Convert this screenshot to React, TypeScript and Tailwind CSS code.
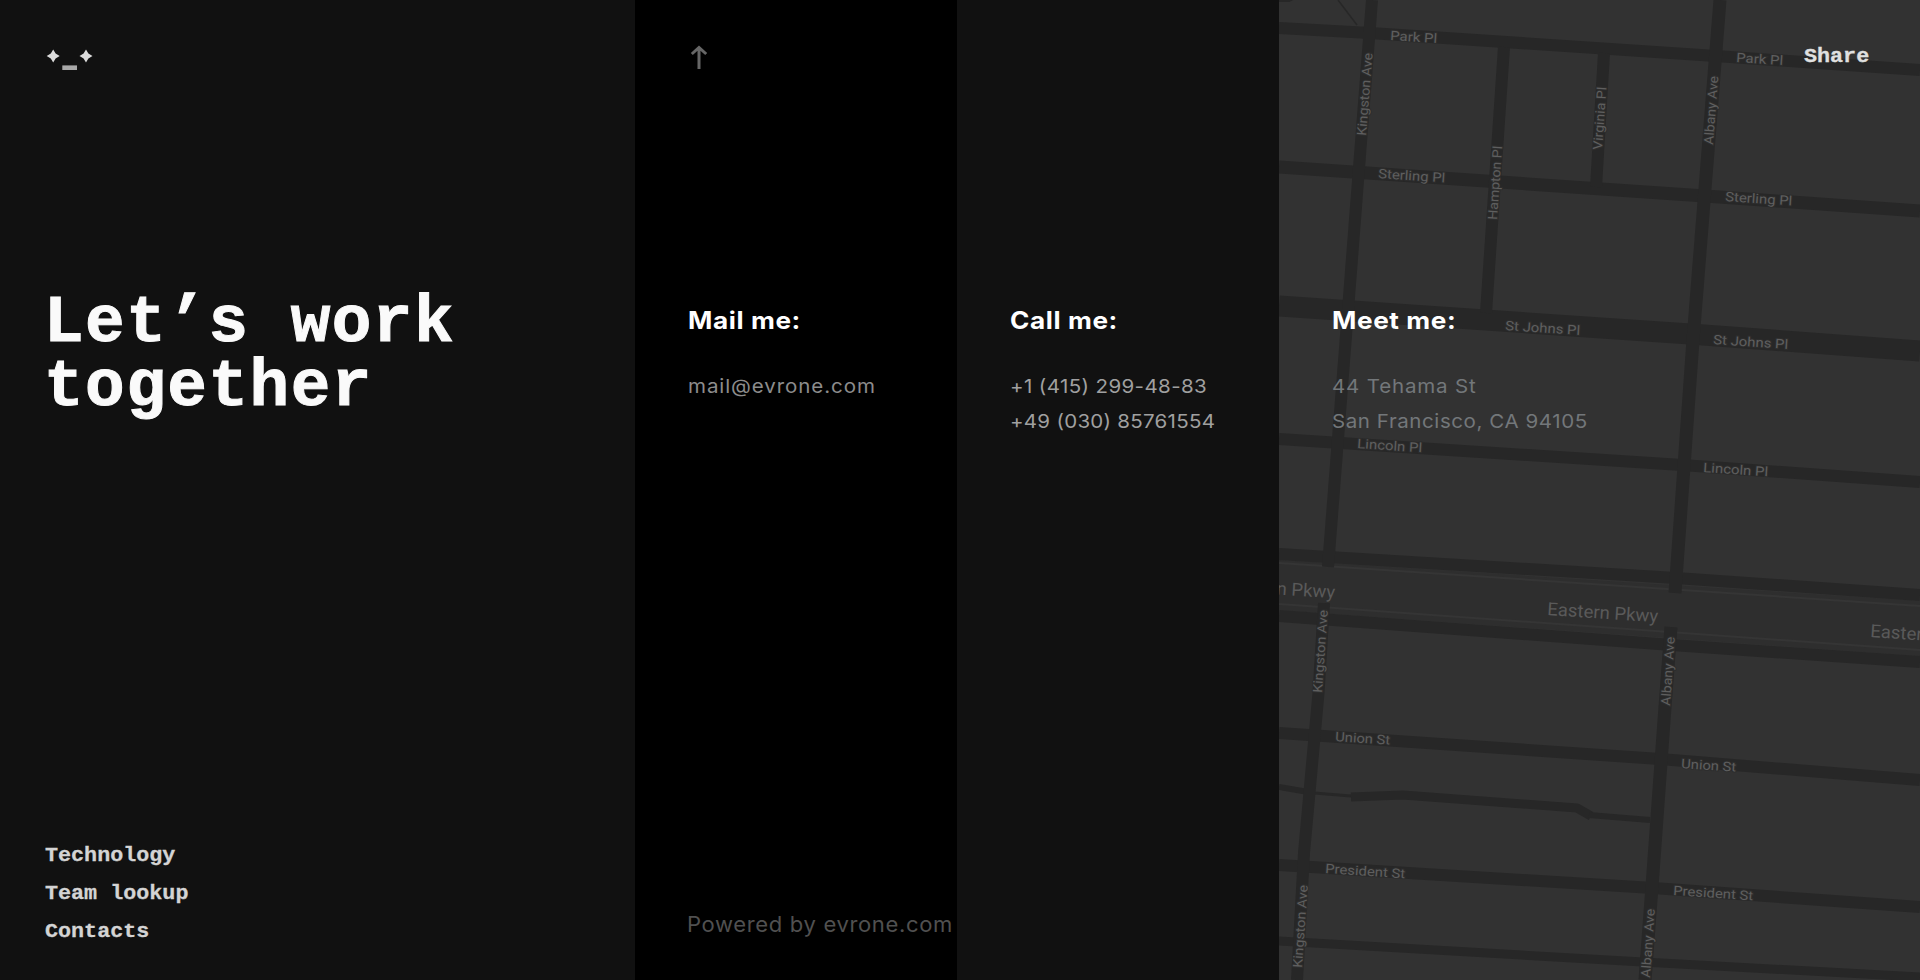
const horizontals = [
  { d: "M0 28 L91 33 L437 56 L641 70", w: 12 },
  { d: "M0 167 L426 196 L641 211", w: 13 },
  { d: "M0 306 L411 334 L641 351", w: 21 },
  { d: "M0 439 L403 465 L641 482", w: 12 },
  { d: "M0 554 L397 578 L641 595", w: 12 },
  { d: "M0 616 L393 645 L641 662", w: 12 },
  { d: "M0 733 L381 759 L641 780", w: 12 },
  { d: "M0 865 L374 888 L641 907", w: 12 },
  { d: "M0 941 L364 962 L641 977", w: 9 },
  { d: "M0 787 L35 793", w: 6 },
  { d: "M35 793 L72 796", w: 3 },
  { d: "M72 797 L124 795 L298 808 L312 816", w: 9 },
  { d: "M310 815 L371 820", w: 6 },
];

const verticals = [
  { d: "M93 0 L70 297 L49 567", w: 12 },
  { d: "M45 603 L39.5 693 L25 853 L18 980", w: 12 },
  { d: "M225 47 L207 313", w: 12 },
  { d: "M325 53 L317 187", w: 12 },
  { d: "M441 0 L414 340 L396 593", w: 13 },
  { d: "M392 627 L386 707 L374 873 L366 980", w: 13 },
  { d: "M59 0 L78 25", w: 1.5 },
  { d: "M0 1 L10 1 L20 -4", w: 2 },
];

const labels = [
  { t: "Park Pl", x: 111, y: 40, a: 3.8, l: 47 },
  { t: "Park Pl", x: 457, y: 62, a: 3.8, l: 47 },
  { t: "Sterling Pl", x: 99, y: 178, a: 3.8, l: 67 },
  { t: "Sterling Pl", x: 446, y: 201, a: 3.8, l: 67 },
  { t: "St Johns Pl", x: 226, y: 330, a: 3.8, l: 75 },
  { t: "St Johns Pl", x: 434, y: 344, a: 3.8, l: 75 },
  { t: "Lincoln Pl", x: 78, y: 448, a: 3.8, l: 65 },
  { t: "Lincoln Pl", x: 424, y: 472, a: 3.8, l: 65 },
  { t: "Union St", x: 56, y: 741, a: 3.8, l: 55 },
  { t: "Union St", x: 402, y: 768, a: 3.8, l: 55 },
  { t: "President St", x: 46, y: 873, a: 3.8, l: 80 },
  { t: "President St", x: 394, y: 895, a: 3.8, l: 80 },
  { t: "Kingston Ave", x: 87, y: 136, a: -85.5, l: 83 },
  { t: "Hampton Pl", x: 218, y: 220, a: -86, l: 74 },
  { t: "Virginia Pl", x: 323, y: 150, a: -86, l: 63 },
  { t: "Albany Ave", x: 434, y: 145, a: -85.5, l: 69 },
  { t: "Kingston Ave", x: 43, y: 693, a: -86, l: 83 },
  { t: "Albany Ave", x: 391, y: 706, a: -86, l: 69 },
  { t: "Kingston Ave", x: 23, y: 968, a: -86, l: 83 },
  { t: "Albany Ave", x: 371, y: 978, a: -86, l: 69 },
];

const parkway = [
  { x: -55, y: 591 },
  { x: 268, y: 615 },
  { x: 591, y: 637 },
];

function StreetMap() {
  return (
    <svg className="absolute inset-0 h-full w-full" viewBox="0 0 641 980" preserveAspectRatio="none" aria-hidden="true">
      <rect width="641" height="980" fill="#323232" />
      <path d="M0 560 L641 601 L641 656 L0 610 Z" fill="#2e2e2e" />
      <path d="M0 563 L641 606 M0 604 L641 650" stroke="#353535" strokeWidth="2" fill="none" />
      <g stroke="#272727" fill="none" strokeLinejoin="round">
        {horizontals.map((r) => (
          <path key={r.d} d={r.d} strokeWidth={r.w} />
        ))}
        {verticals.map((r) => (
          <path key={r.d} d={r.d} strokeWidth={r.w} />
        ))}
      </g>
      <g
        fill="#5f5f5f"
        stroke="#2d2d2d"
        strokeWidth="2"
        paintOrder="stroke"
        fontFamily="Roboto, sans-serif"
        fontSize="13"
      >
        {labels.map((l) => (
          <text
            key={l.t + l.x}
            x={l.x}
            y={l.y}
            textLength={l.l}
            lengthAdjust="spacingAndGlyphs"
            transform={`rotate(${l.a} ${l.x} ${l.y})`}
          >
            {l.t}
          </text>
        ))}
      </g>
      <g fill="#5a5a5a" fontFamily="Roboto, sans-serif" fontSize="18">
        {parkway.map((l) => (
          <text
            key={l.x}
            x={l.x}
            y={l.y}
            textLength="111"
            lengthAdjust="spacingAndGlyphs"
            transform={`rotate(3.8 ${l.x} ${l.y})`}
          >
            Eastern Pkwy
          </text>
        ))}
      </g>
    </svg>
  );
}

const mono = "font-['Liberation_Mono',monospace] font-bold";
const link = "origin-left scale-x-[1.06] text-[20.5px] [-webkit-text-stroke:0.3px]";
const heading = "origin-left scale-x-[1.09] text-[24px] leading-8 font-bold tracking-[0.55px] whitespace-nowrap text-white";
const line = "origin-left scale-x-[1.08] text-[19px] leading-[35px] whitespace-nowrap";

export default function App() {
  return (
    <main className="flex h-[980px] w-full overflow-hidden bg-[#111111] font-['Inter',sans-serif]">
      <section className="flex w-[635px] shrink-0 flex-col pl-[45px]">
        <div className="h-[292px] pt-[49px]">
          <svg className="ml-px h-[22px] w-[48px]" viewBox="0 0 48 22" fill="#dcdcdc" aria-label="Logo">
            <path d="M7.2 0.5 L9.6 4.6 L13.7 7 L9.6 9.4 L7.2 13.5 L4.8 9.4 L0.7 7 L4.8 4.6 Z" />
            <path d="M40 0.5 L42.4 4.6 L46.5 7 L42.4 9.4 L40 13.5 L37.6 9.4 L33.5 7 L37.6 4.6 Z" />
            <rect x="16.3" y="16.4" width="14.7" height="4.6" fill="#a8a8a8" />
          </svg>
        </div>
        <h1 className={`${mono} -ml-px h-[545px] text-[66px] leading-[63.5px] tracking-[1.5px] text-[#fafafa] [-webkit-text-stroke:1px]`}>
          Let’s work
          <br />
          together
        </h1>
        <nav className={`${mono} flex flex-col leading-[38px] text-[#d4d4d4]`}>
          <a className={link}>Technology</a>
          <a className={link}>Team lookup</a>
          <a className={link}>Contacts</a>
        </nav>
      </section>

      <section className="flex w-[322px] shrink-0 flex-col bg-black pl-[53px]">
        <div className="h-[305px] pt-[45px]">
          <svg className="ml-[2px] h-6 w-[18px]" viewBox="0 0 18 24" fill="none" stroke="#666666" strokeWidth="3" aria-hidden="true">
            <path d="M9 24 V3 M1.8 9 L9 2.5 L16.2 9" />
          </svg>
        </div>
        <h2 className={heading}>Mail me:</h2>
        <p className={`${line} mt-8 h-[542px] tracking-[0.85px] text-[#8c8c8c]`}>mail@evrone.com</p>
        <p className="-ml-px origin-left scale-x-105 text-[21px] leading-7 tracking-[0.6px] whitespace-nowrap text-[#505050]">
          Powered by evrone.com
        </p>
      </section>

      <section className="w-[322px] shrink-0 pt-[305px] pl-[53px]">
        <h2 className={heading}>Call me:</h2>
        <p className={`${line} mt-8 tracking-[0.35px] text-[#a0a0a0]`}>+1 (415) 299-48-83</p>
        <p className={`${line} tracking-[0.25px] text-[#a0a0a0]`}>+49 (030) 85761554</p>
      </section>

      <section className="relative min-w-0 flex-1 overflow-hidden">
        <StreetMap />
        <div className="relative flex h-[305px] justify-end pt-[43px] pr-[54px]">
          <a className={`${mono} ${link} leading-7 text-[#e0e0e0]`}>Share</a>
        </div>
        <div className="relative pl-[53px]">
          <h2 className={heading}>Meet me:</h2>
          <p className={`${line} mt-8 tracking-[0.75px] text-[#73777a]`}>44 Tehama St</p>
          <p className={`${line} tracking-[0.53px] text-[#73777a]`}>San Francisco, CA 94105</p>
        </div>
      </section>
    </main>
  );
}
